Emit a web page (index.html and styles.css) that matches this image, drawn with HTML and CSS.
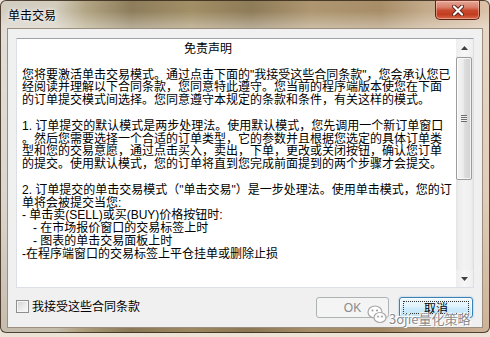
FILE: index.html
```html
<!DOCTYPE html>
<html lang="zh-CN">
<head>
<meta charset="utf-8">
<title>单击交易</title>
<link rel="stylesheet" href="styles.css">
</head>
<body>
<div class="window">
  <div class="titlebar">
    <span class="title">单击交易</span>
    <div class="close-btn">
      <svg width="12" height="11" viewBox="0 0 12 11">
        <path d="M2 1.5 L10 9.5 M10 1.5 L2 9.5" stroke="#5a2418" stroke-width="4" stroke-linecap="round"/>
        <path d="M2 1.5 L10 9.5 M10 1.5 L2 9.5" stroke="#ffffff" stroke-width="2.2" stroke-linecap="round"/>
      </svg>
    </div>
  </div>
  <div class="client">
    <div class="doc">
      <div class="doc-text">
        <div class="ln heading">免责声明</div>
        <div class="ln">&nbsp;</div>
        <div class="ln">您将要激活单击交易模式。通过点击下面的"我接受这些合同条款"，您会承认您已</div>
        <div class="ln">经阅读并理解以下合同条款，您同意特此遵守。您当前的程序端版本使您在下面</div>
        <div class="ln">的订单提交模式间选择。您同意遵守本规定的条款和条件，有关这样的模式。</div>
        <div class="ln">&nbsp;</div>
        <div class="ln">1. 订单提交的默认模式是两步处理法。使用默认模式，您先调用一个新订单窗口</div>
        <div class="ln">。然后您需要选择一个合适的订单类型，它的参数并且根据您选定的具体订单类</div>
        <div class="ln">型和您的交易意愿，通过点击买入，卖出，下单，更改或关闭按钮，确认您订单</div>
        <div class="ln">的提交。使用默认模式，您的订单将直到您完成前面提到的两个步骤才会提交。</div>
        <div class="ln">&nbsp;</div>
        <div class="ln">2. 订单提交的单击交易模式（"单击交易"）是一步处理法。使用单击模式，您的订</div>
        <div class="ln">单将会被提交当您:</div>
        <div class="ln">- 单击卖(SELL)或买(BUY)价格按钮时:</div>
        <div class="ln indent">- 在市场报价窗口的交易标签上时</div>
        <div class="ln indent">- 图表的单击交易面板上时</div>
        <div class="ln">-在程序端窗口的交易标签上平仓挂单或删除止损</div>
      </div>
      <div class="scrollbar">
        <div class="sb-btn">
          <svg width="7" height="4" viewBox="0 0 7 4"><path d="M0 4 L3.5 0 L7 4 Z" fill="#404040"/></svg>
        </div>
        <div class="sb-thumb"><span class="grip"></span></div>
        <div class="sb-track"></div>
        <div class="sb-btn">
          <svg width="7" height="4" viewBox="0 0 7 4"><path d="M0 0 L7 0 L3.5 4 Z" fill="#404040"/></svg>
        </div>
      </div>
    </div>
    <div class="footer">
      <label class="check"><span class="check-box"></span><span class="check-label">我接受这些合同条款</span></label>
      <div class="buttons">
        <button class="btn btn-disabled" disabled>OK</button>
        <button class="btn btn-default"><span>取消</span></button>
      </div>
    </div>
  </div>
</div>
<div class="watermark">
  <svg class="wm-icon" width="21" height="21" viewBox="0 0 21 21">
    <ellipse cx="8" cy="8" rx="7" ry="6" fill="#ffffff" fill-opacity="0.85" stroke="#a8a8a8" stroke-width="1.2"/>
    <circle cx="5.5" cy="6.5" r="1" fill="#9a9a9a"/>
    <circle cx="10" cy="6.5" r="1" fill="#9a9a9a"/>
    <ellipse cx="13" cy="13.5" rx="6" ry="5" fill="#ffffff" fill-opacity="0.9" stroke="#a8a8a8" stroke-width="1.2"/>
    <circle cx="11" cy="12.5" r="0.9" fill="#9a9a9a"/>
    <circle cx="15" cy="12.5" r="0.9" fill="#9a9a9a"/>
  </svg>
  <span class="wm-text">3ojie量化策略</span>
</div>
</body>
</html>
```

FILE: styles.css
```css
html, body {
  margin: 0;
  padding: 0;
}

body {
  width: 490px;
  height: 337px;
  overflow: hidden;
  background: #ece2d6;
  font-family: "Liberation Sans", "Noto Sans CJK SC", sans-serif;
  font-size: 12px;
  color: #000;
  position: relative;
}

.window {
  width: 490px;
  height: 333px;
  box-sizing: border-box;
  border: 1px solid rgba(55, 42, 28, 0.85);
  border-radius: 6px;
  display: flex;
  flex-direction: column;
  background:
    linear-gradient(to bottom, rgba(255,255,255,0) 0, rgba(255,255,255,0) 10px, rgba(255,255,255,0.35) 26px, rgba(255,255,255,0.18) 60%, rgba(120,90,60,0.15) 100%),
    linear-gradient(to right, #d3cdc2 0, #d3ccbd 55px, #b2a583 85px, #8d7d5b 130px, #a28f66 190px, #8e7b58 250px, #ad9670 310px, #a88e68 380px, #c3aa8a 425px, #d2b89c 465px, #dcc4ab 490px);
}

.titlebar {
  height: 27px;
  flex: none;
  display: flex;
  align-items: center;
  padding-left: 7px;
  position: relative;
}

.title {
  font-family: "Noto Sans CJK SC", sans-serif;
  font-size: 12px;
  line-height: 14px;
  color: #000;
  text-shadow: 0 0 6px rgba(255,255,255,0.95), 0 0 3px rgba(255,255,255,0.9);
}

.close-btn {
  position: absolute;
  left: 434px;
  top: -1px;
  width: 45px;
  height: 20px;
  box-sizing: border-box;
  border: 1px solid #5b2315;
  border-top-color: #7a3a2a;
  border-radius: 0 0 5px 5px;
  background: linear-gradient(to bottom, #e6a898 0, #d97e6a 35%, #c84a2e 52%, #c13d20 75%, #d9694a 100%);
  box-shadow: inset 0 0 0 1px rgba(255,220,210,0.45);
  display: flex;
  align-items: center;
  justify-content: center;
}

.client {
  flex: 1;
  margin: 0 6px 5px 6px;
  border: 1px solid #9c8f80;
  background: #f0f0f0;
  padding: 9px 8px 9px 8px;
  display: flex;
  flex-direction: column;
}

.doc {
  height: 250px;
  box-sizing: border-box;
  border: 1px solid #dcdfe5;
  border-top-color: #9ca3ab;
  background: #fff;
  display: flex;
}

.doc-text {
  flex: 1;
  padding: 4px 0 0 5px;
  overflow: hidden;
  font-family: "Liberation Sans", "Noto Sans CJK SC", sans-serif;
  font-size: 12px;
}

.ln {
  line-height: 12.8px;
  height: 12.8px;
  white-space: nowrap;
}

.heading {
  text-align: center;
  padding-right: 62px;
}

.indent {
  padding-left: 11px;
}

.scrollbar {
  width: 17px;
  flex: none;
  display: flex;
  flex-direction: column;
  background: linear-gradient(to right, #e2e2e2 0, #ececec 2px, #f3f3f3 8px, #efefef 15px, #e6e6e6 17px);
}

.sb-btn {
  height: 17px;
  flex: none;
  display: flex;
  align-items: center;
  justify-content: center;
  background: linear-gradient(to right, #eeeeee, #f7f7f7 50%, #eeeeee);
}

.sb-thumb {
  height: 123px;
  flex: none;
  margin: 1px 1px 0 0;
  box-sizing: border-box;
  border: 1px solid #9c9c9c;
  border-radius: 2px;
  background: linear-gradient(to right, #f4f4f4 0, #ececec 45%, #dcdcdc 55%, #d2d2d2 100%);
  box-shadow: inset 0 0 0 1px rgba(255,255,255,0.7);
  display: flex;
  align-items: center;
  justify-content: center;
}

.grip {
  width: 6px;
  height: 7px;
  background: repeating-linear-gradient(to bottom, #6c6c6c 0, #6c6c6c 1px, #f2f2f2 1px, #f2f2f2 2px);
}

.sb-track {
  flex: 1;
}

.footer {
  margin-top: 9px;
  height: 21px;
  display: flex;
  align-items: center;
  justify-content: space-between;
  padding-right: 1px;
}

.check {
  display: flex;
  align-items: center;
  margin-top: -3px;
}

.check-box {
  width: 13px;
  height: 13px;
  box-sizing: border-box;
  border: 1px solid #8e8f8f;
  background: linear-gradient(135deg, #cfd0d2 0, #e9e9ea 50%, #fafafa 100%);
  box-shadow: inset 0 0 0 1px #f6f6f6;
}

.check-label {
  margin-left: 3px;
  font-family: "Noto Sans CJK SC", sans-serif;
  font-size: 12px;
  line-height: 14px;
}

.buttons {
  display: flex;
  gap: 10px;
}

.btn {
  width: 73px;
  height: 21px;
  box-sizing: border-box;
  border-radius: 3px;
  font-family: "Liberation Sans", "Noto Sans CJK SC", sans-serif;
  font-size: 12px;
  padding: 0;
  position: relative;
}

.btn-disabled {
  border: 1px solid #adb2b5;
  background: #f4f4f4;
  color: #8a8a8a;
}

.btn-default {
  width: 74px;
  border: 1px solid #3c7fb1;
  color: #000;
  background: linear-gradient(to bottom, #eef8fe 0, #e0f3fd 48%, #cfecfc 52%, #bfe4f8 100%);
  box-shadow: inset 0 0 0 1px rgba(255,255,255,0.75), 0 0 2px rgba(90,170,230,0.7);
}

.btn-default::after {
  content: "";
  position: absolute;
  left: 3px;
  top: 3px;
  right: 3px;
  bottom: 3px;
  border: 1px dotted #333;
}

.watermark {
  position: absolute;
  left: 367px;
  top: 304px;
  display: flex;
  align-items: center;
  gap: 1px;
}

.wm-text {
  font-family: "Noto Sans CJK SC", sans-serif;
  font-size: 13px;
  line-height: 13px;
  margin-top: 8px;
  color: #8a8a8a;
  text-shadow: 0 0 1px #fff, 0 0 2px #fff, 1px 1px 0 #fff, -1px -1px 0 #fff;
}
```
